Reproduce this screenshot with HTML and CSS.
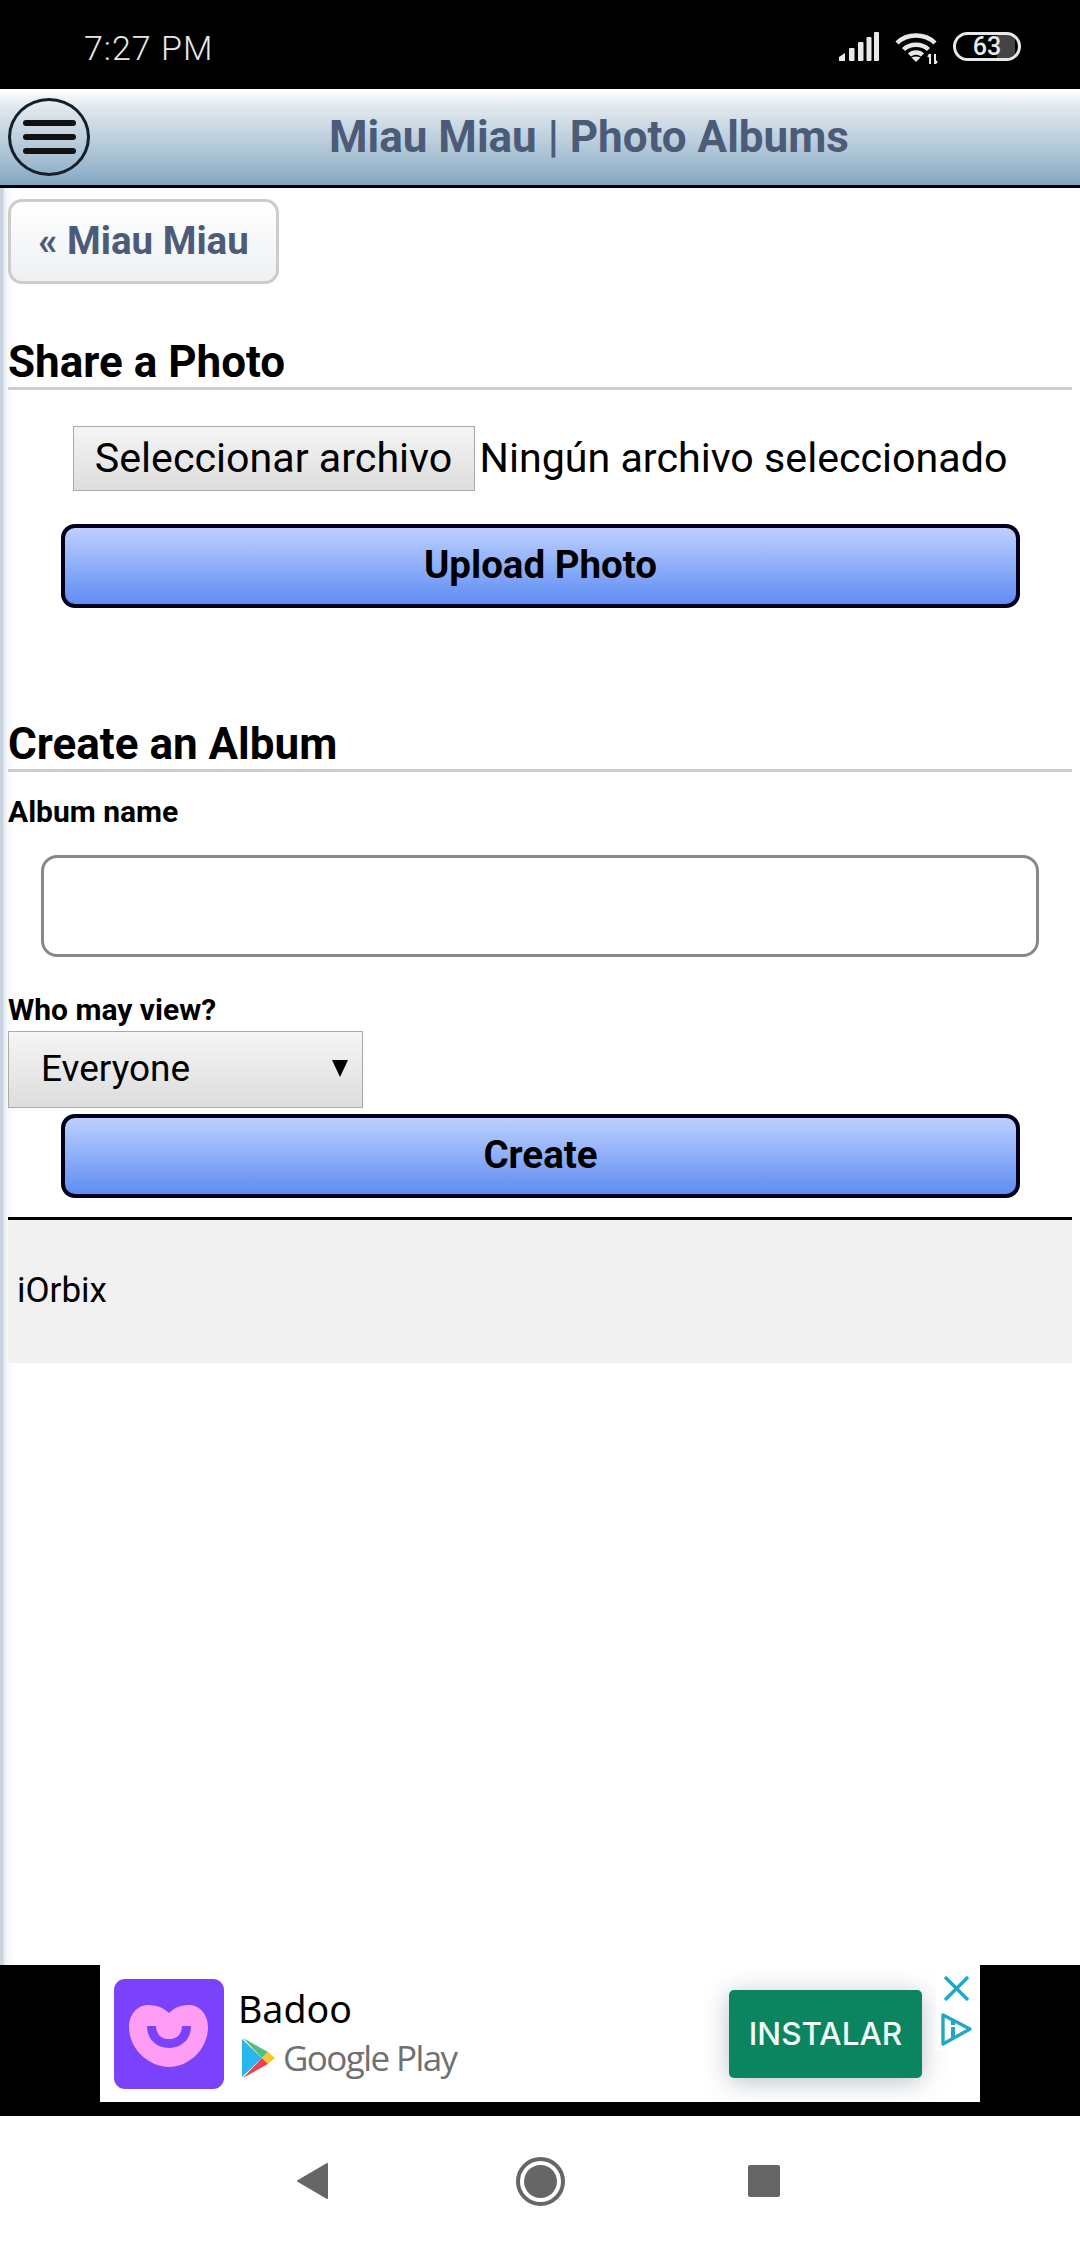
FILE: index.html
```html
<!DOCTYPE html>
<html lang="en">
<head>
  <meta charset="UTF-8" />
  <title>Miau Miau | Photo Albums</title>
  <link rel="stylesheet" href="styles.css">
</head>
<body>
  <div class="statusbar">
    <span class="clock">7:27 PM</span>
    <div class="status-icons">
      <svg class="icon-signal" width="40" height="29" viewBox="0 0 40 29">
        <path d="M0 29V25L6 21V29Z" />
        <rect x="10" y="16" width="5.5" height="13" rx="1" />
        <rect x="19" y="10" width="5.5" height="19" rx="1" />
        <rect x="27.5" y="5" width="5" height="24" rx="1" />
        <rect x="35" y="0" width="5" height="29" rx="1" />
      </svg>
      <svg class="icon-wifi" width="44" height="32" viewBox="0 0 44 32">
        <path d="M2 11C12 1 30 1 40 11" />
        <path d="M8.5 17.5C15 11 27 11 33.5 17.5" />
        <path d="M14.5 23C18 19.5 24 19.5 27.5 23" />
        <path class="solid" d="M21 30L16.5 25.5C19 24 23 24 25.5 25.5Z" />
        <path class="thin" d="M35 22V32M33 25L35 22M40 22V32M40 32L42 29" />
      </svg>
      <div class="battery">
        <span class="battery-num">63</span>
      </div>
    </div>
  </div>

  <header class="topbar">
    <button class="menu-btn" aria-label="Menu">
      <span></span><span></span><span></span>
    </button>
    <h1>Miau Miau | Photo Albums</h1>
  </header>

  <main class="content">
    <a class="back-btn" href="#">« Miau Miau</a>

    <h2 class="first">Share a Photo</h2>
    <div class="file-row">
      <button class="file-btn">Seleccionar archivo</button>
      <span>Ningún archivo seleccionado</span>
    </div>
    <button class="action-btn upload">Upload Photo</button>

    <h2 class="second">Create an Album</h2>
    <label class="label-name" for="album">Album name</label>
    <input class="album-input" type="text" id="album" />

    <label class="label-view" for="view">Who may view?</label>
    <div class="select-wrap">
      <select id="view">
        <option>Everyone</option>
      </select>
    </div>
    <button class="action-btn create">Create</button>

    <div class="footer-bar">iOrbix</div>
  </main>

  <div class="ad">
    <div class="ad-card">
      <svg class="ad-icon" width="110" height="110" viewBox="0 0 110 110">
        <rect width="110" height="110" rx="11" fill="#7a42fb" />
        <path fill="#ff9df5" d="M55 34C49 28 41 26 34 26C23 26 15 36 15 48C15 71 36 88 55 88C74 88 94 71 94 48C94 36 86 26 75 26C68 26 61 28 55 34Z" />
        <path fill="none" stroke="#7a42fb" stroke-width="9" d="M37.5 47C37.5 58 45 64.5 55 64.5C65 64.5 72.5 58 72.5 47" />
      </svg>
      <div class="ad-text">
        <div class="ad-name">Badoo</div>
        <div class="ad-store">
          <svg width="33" height="40" viewBox="0 0 33 40">
            <path fill="#29b6ee" d="M0 1V39L20 20Z" />
            <path fill="#4ec078" d="M1 0L20 20L26 14Z" />
            <path fill="#fdc62f" d="M26 14L33 20L26 26L20 20Z" />
            <path fill="#e8434f" d="M1 40L20 20L26 26Z" />
          </svg>
          <span>Google Play</span>
        </div>
      </div>
      <button class="install-btn">INSTALAR</button>
      <div class="ad-marks">
        <svg width="25" height="25" viewBox="0 0 25 25">
          <path fill="none" stroke="#22a8c4" stroke-width="3.4" d="M1 1L24 24M24 1L1 24" />
        </svg>
        <svg width="31" height="33" viewBox="0 0 31 33">
          <path fill="none" stroke="#22a8c4" stroke-width="3.4" stroke-linejoin="round" d="M2 2L29 16L2 31Z" />
          <rect x="10" y="14" width="4" height="11" fill="#22a8c4" />
          <rect x="10" y="8" width="4" height="4" fill="#22a8c4" />
        </svg>
      </div>
    </div>
  </div>

  <nav class="navbar">
    <svg width="31" height="36" viewBox="0 0 31 36">
      <path fill="#666" stroke="#666" stroke-width="2" stroke-linejoin="round" d="M30 1V35L1 18Z" />
    </svg>
    <svg class="nav-home" width="49" height="49" viewBox="0 0 49 49">
      <circle cx="24.5" cy="24.5" r="22.5" fill="none" stroke="#666" stroke-width="4" />
      <circle cx="24.5" cy="24.5" r="16.5" fill="#666" />
    </svg>
    <div class="nav-square"></div>
  </nav>
</body>
</html>
```

FILE: styles.css
```css
* {
  box-sizing: border-box;
}

html, body {
  margin: 0;
  padding: 0;
}

body {
  width: 1080px;
  height: 2246px;
  font-family: Roboto, "Liberation Sans", sans-serif;
  background: white;
  overflow: hidden;
}

.statusbar {
  height: 89px;
  background: black;
  display: flex;
  justify-content: space-between;
  padding: 32px 59px 0 84px;
}

.clock {
  color: #e8e8e8;
  font-size: 34px;
  font-weight: 300;
  line-height: 32px;
  letter-spacing: 1px;
}

.status-icons {
  display: flex;
  align-items: flex-start;
  height: 32px;
}

.icon-signal {
  fill: #e8e8e8;
}

.icon-wifi {
  margin-left: 16px;
  fill: none;
  stroke: #e8e8e8;
  stroke-width: 4.5px;
}

.icon-wifi .solid {
  fill: #e8e8e8;
  stroke: none;
}

.icon-wifi .thin {
  stroke-width: 2px;
}

.battery {
  width: 68px;
  height: 29px;
  margin-left: 14px;
  border: 3px solid #e8e8e8;
  border-radius: 15px;
  background: linear-gradient(to right, black 0, black 66%, #444 66%, #444 95%, black 95%);
  display: flex;
  justify-content: center;
  align-items: center;
}

.battery-num {
  color: #e8e8e8;
  font-size: 25px;
  font-weight: 500;
  line-height: 23px;
}

.topbar {
  height: 99px;
  padding-left: 98px;
  border-bottom: 3px solid black;
  background: linear-gradient(to bottom, #ffffff 0%, #dfe7ed 20%, #a9c2d4 70%, #82a8c1 100%);
  position: relative;
  display: flex;
  justify-content: center;
  align-items: center;
}

.topbar h1 {
  margin: 0;
  color: #4b5b78;
  font-size: 44px;
  font-weight: 700;
  line-height: 52px;
}

.menu-btn {
  position: absolute;
  left: 8px;
  top: 9px;
  width: 82px;
  height: 78px;
  padding: 0;
  border: 3px solid #14202a;
  border-radius: 50%;
  background: transparent;
  display: flex;
  flex-direction: column;
  justify-content: center;
  align-items: center;
  gap: 8px;
}

.menu-btn span {
  width: 53px;
  height: 6px;
  border-radius: 3px;
  background: #111;
}

.content {
  height: 1777px;
  padding: 11px 8px 0;
  background: linear-gradient(to right, #c8d4e2 0, #c8d4e2 3px, #e8edf2 4px, #f6f8fa 8px, white 14px);
}

.back-btn {
  display: flex;
  justify-content: center;
  align-items: center;
  width: 271px;
  height: 85px;
  padding-bottom: 2px;
  border: 3px solid #ccc;
  border-radius: 14px;
  background: linear-gradient(to bottom, #ffffff, #eef0f2);
  color: #4b5b78;
  font-size: 38.5px;
  font-weight: 700;
  text-decoration: none;
}

h2 {
  margin: 0;
  height: 53px;
  border-bottom: 3px solid #ccc;
  color: black;
  font-size: 44px;
  font-weight: 700;
  line-height: 50px;
}

h2.first {
  margin-top: 53px;
}

h2.second {
  margin-top: 111px;
}

.file-row {
  margin-top: 36px;
  display: flex;
  justify-content: center;
  align-items: center;
  gap: 5px;
  font-size: 41.2px;
  line-height: 63px;
  color: black;
}

.file-btn {
  width: 402px;
  height: 65px;
  padding: 0 0 2px;
  border: 1px solid #aaa;
  background: linear-gradient(to bottom, #f5f5f5, #dddddd);
  color: black;
  font-family: inherit;
  font-size: 41.2px;
}

.action-btn {
  display: block;
  width: 959px;
  height: 84px;
  padding: 0 0 4px;
  margin-left: 53px;
  border: 4px solid #00001a;
  border-radius: 14px;
  background: linear-gradient(to bottom, #bdd0fe, #5f8df3);
  color: black;
  font-family: inherit;
  font-size: 38.5px;
  font-weight: 700;
}

.upload {
  margin-top: 33px;
}

.create {
  margin-top: 6px;
}

label {
  display: block;
  color: black;
  font-size: 30px;
  font-weight: 700;
  line-height: 36px;
}

.label-name {
  margin-top: 22px;
}

.label-view {
  margin-top: 35px;
}

.album-input {
  display: block;
  width: 998px;
  height: 102px;
  margin: 25px 0 0 33px;
  border: 3px solid #888;
  border-radius: 16px;
  background: white;
  font-size: 40px;
}

.select-wrap {
  position: relative;
  width: 355px;
  height: 77px;
  margin-top: 3px;
}

.select-wrap select {
  appearance: none;
  width: 100%;
  height: 100%;
  padding: 0 0 2px 32px;
  border: 1px solid #aaa;
  border-radius: 0;
  background: linear-gradient(to bottom, #f5f5f5, #dddddd);
  color: black;
  font-family: inherit;
  font-size: 37px;
}

.select-wrap::after {
  content: "";
  position: absolute;
  right: 15px;
  top: 29px;
  border-left: 8.5px solid transparent;
  border-right: 8.5px solid transparent;
  border-top: 17px solid black;
}

.footer-bar {
  height: 146px;
  margin-top: 19px;
  padding: 0 0 2px 9px;
  border-top: 3px solid black;
  background: #f1f1f1;
  color: black;
  font-size: 35px;
  display: flex;
  align-items: center;
}

.ad {
  height: 151px;
  padding-bottom: 14px;
  background: black;
  display: flex;
  justify-content: center;
}

.ad-card {
  width: 880px;
  padding-left: 14px;
  background: white;
  display: flex;
  align-items: center;
  overflow: hidden;
}

.ad-text {
  margin-left: 14px;
  margin-top: -3px;
  display: flex;
  flex-direction: column;
}

.ad-name {
  color: black;
  font-family: "Noto Sans", sans-serif;
  font-size: 37.5px;
  line-height: 44px;
}

.ad-store {
  margin-top: 7px;
  padding-left: 4px;
  display: flex;
  align-items: center;
  gap: 8px;
  color: #707070;
  font-family: "Open Sans", sans-serif;
  font-size: 35px;
  font-weight: 500;
  line-height: 40px;
  letter-spacing: -1.6px;
}

.install-btn {
  width: 193px;
  height: 88px;
  margin-left: auto;
  padding: 0;
  border: none;
  border-radius: 5px;
  background: #0a8560;
  box-shadow: 0 4px 26px rgba(60, 80, 100, 0.35);
  color: #f2fbf8;
  font-family: Inter, Roboto, sans-serif;
  font-size: 31.5px;
  font-weight: 500;
}

.ad-marks {
  position: relative;
  width: 44px;
  height: 85px;
  margin: 0 0 52px 14px;
  padding: 11px 3px 0 0;
  background: white;
  display: flex;
  flex-direction: column;
  align-items: center;
  gap: 12px;
}

.navbar {
  height: 130px;
  padding-left: 297px;
  background: white;
  display: flex;
  align-items: center;
}

.nav-home {
  margin-left: 187.5px;
}

.nav-square {
  width: 32px;
  height: 32px;
  margin-left: 183.5px;
  border-radius: 2px;
  background: #666;
}
```
